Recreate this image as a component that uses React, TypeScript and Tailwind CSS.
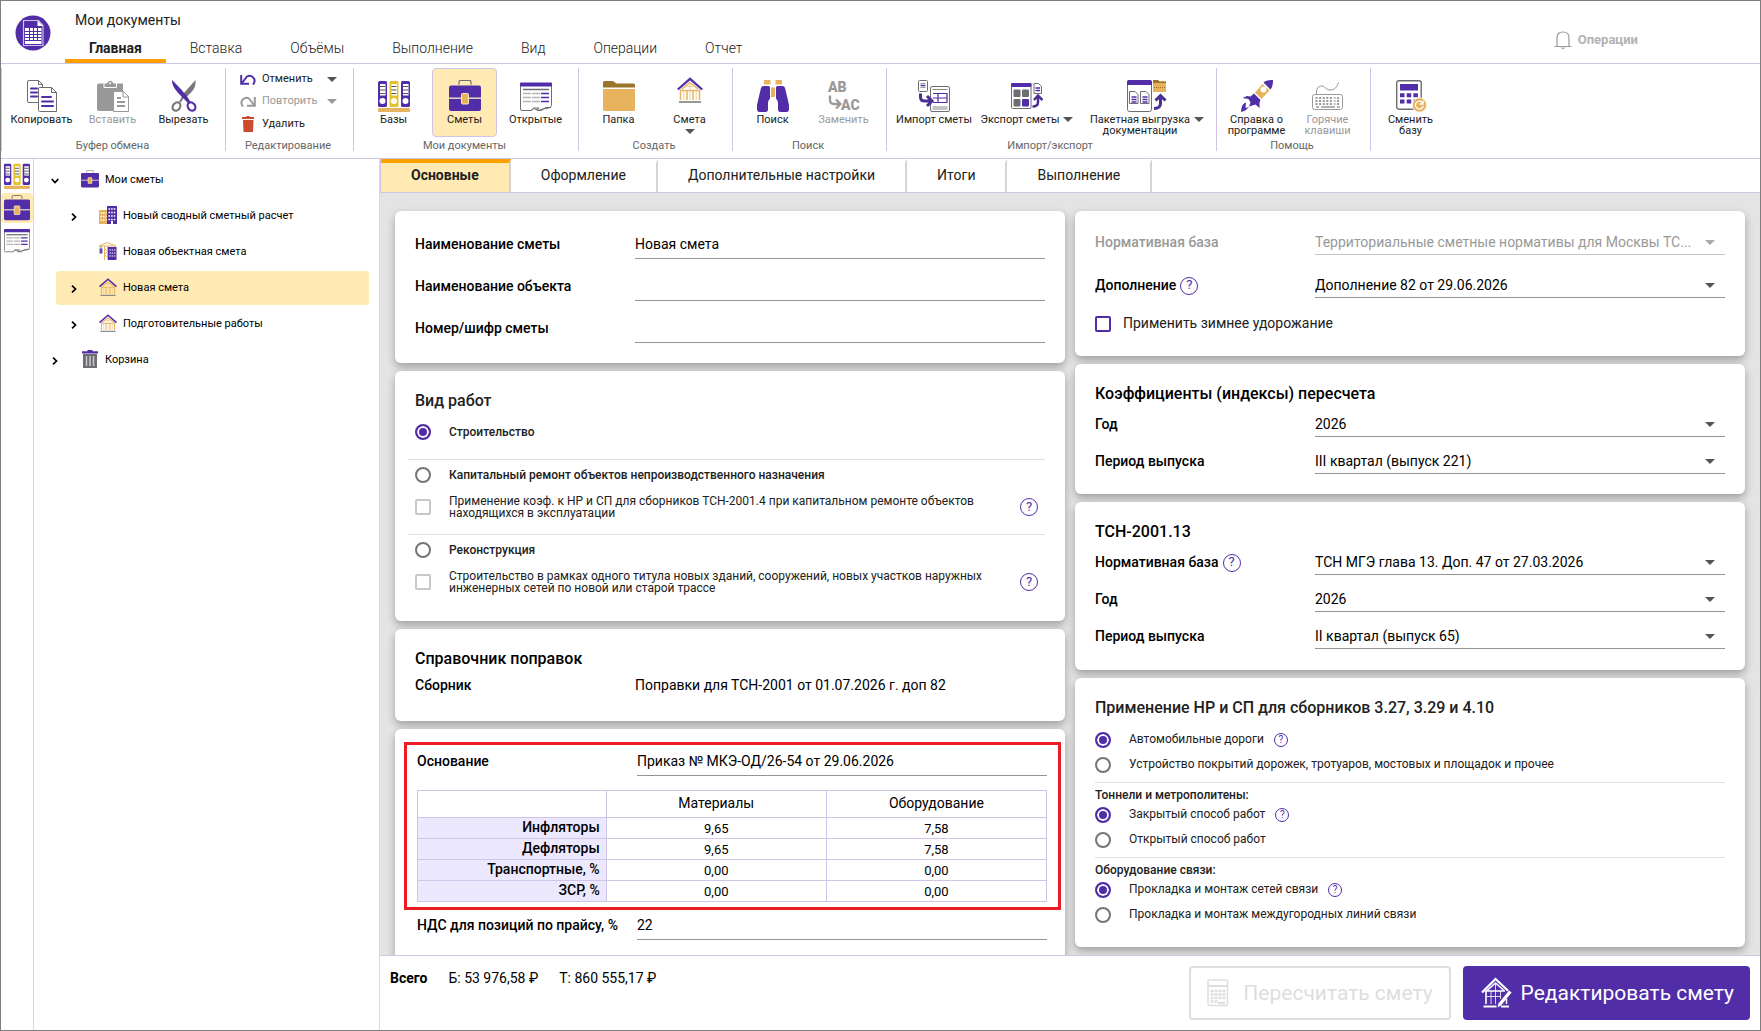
import { useState } from "react";
import type { ReactNode } from "react";
import clsx from "clsx";

interface IconProps {
  className?: string;
}

interface TreeNode {
  label: string;
  icon: ReactNode;
  level: 0 | 1;
  state: "open" | "closed" | "leaf";
}

/* ---------- icons ---------- */

function LogoIcon() {
  return (
    <svg className="size-9" viewBox="0 0 36 36">
      <circle cx="18" cy="18" r="17.5" fill="#512da8" />
      <path d="M8.5 5.5h15l4.500 5v20h-19.500z" fill="#512da8" stroke="#cfc3ea" strokeWidth="1.200" />
      <path d="M22.500 5.500v5.500h5.500z" fill="#fff" />
      <rect x="10" y="13" width="16.500" height="16" fill="#fff" />
      <path d="M10 16.500h16.500M10 19.500h16.500M10 22.500h16.500M10 25.500h16.500M14.500 13v12.500M18.500 13v12.500M22.500 13v12.500" stroke="#512da8" />
    </svg>
  );
}

function CopyIcon({ className = "size-8" }: IconProps) {
  return (
    <svg className={className} viewBox="0 0 32 32" fill="none">
      <path d="M3 .5h9.500l4 4V22.500h-13.500a1.500 1.500 0 0 1-1.500-1.500V2a1.500 1.500 0 0 1 1.500-1.500z" fill="#fff" stroke="#6d6d72" />
      <path d="M12.500.5v4h4" stroke="#6d6d72" />
      <path d="M5 8.500h6M5 12.500h6M5 16.500h6" stroke="#512da8" strokeWidth="2" strokeLinecap="round" />
      <path d="M13.500 7.500h12l5 5V31.500h-17a1 1 0 0 1-1-1v-22a1 1 0 0 1 1-1z" fill="#fff" stroke="#6d6d72" />
      <path d="M25.500 7.500v5h5" stroke="#6d6d72" />
      <path d="M16 17h9M16 21.500h11M16 26h11" stroke="#512da8" strokeWidth="2" strokeLinecap="round" />
    </svg>
  );
}

function PasteIcon() {
  return (
    <svg className="size-8" viewBox="0 0 32 32" fill="none">
      <path d="M2 3.500h24V31H2a2 2 0 0 1-2-2V5.500a2 2 0 0 1 2-2z" fill="#999" />
      <path d="M7 3h3a3.300 3.300 0 0 1 6.500 0h3v4.500H7z" fill="#999" stroke="#fff" />
      <circle cx="13.200" cy="3.300" r="1" fill="#fff" />
      <path d="M18 11.500h8.500l5 5V31.500H16.500V13a1.500 1.500 0 0 1 1.500-1.500z" fill="#fff" stroke="#999" />
      <path d="M26 11.500v5.500h5.500" stroke="#999" />
      <path d="M20 18h4M20 22h8M20 26h8" stroke="#999" strokeWidth="2" />
    </svg>
  );
}

function CutIcon() {
  return (
    <svg className="size-8" viewBox="0 0 32 32" fill="none">
      <path d="M27.500 0c.5 5-1 9-4 12l-5 5-3-3.500z" fill="#77777a" />
      <path d="M15 17l-3 5" stroke="#77777a" strokeWidth="2" />
      <ellipse cx="8.500" cy="26.500" rx="3.500" ry="4.500" transform="rotate(35 8.500 26.500)" stroke="#77777a" strokeWidth="2.200" />
      <path d="M4 0c1.500 1 14 14.500 15.500 17l3 5-2.500 1-7-7C8 11 4 6 4 0z" fill="#512da8" />
      <ellipse cx="23.500" cy="26.500" rx="3.500" ry="4.500" transform="rotate(-35 23.500 26.500)" stroke="#512da8" strokeWidth="2.200" />
    </svg>
  );
}

function UndoIcon({ redo = false }: { redo?: boolean }) {
  const color = redo ? "#999" : "#512da8";
  return (
    <svg className={clsx("w-4 h-3", redo && "-scale-x-100")} viewBox="0 0 16 12" fill="none" stroke={color}>
      <path d="M1.200 2v8.800H9" strokeWidth="2" />
      <path d="M2 10L7 3.500a5 5 0 0 1 7 6.500l-1 1.500" strokeWidth="2" />
    </svg>
  );
}

function DeleteIcon() {
  return (
    <svg className="w-3 h-4" viewBox="0 0 12 16" fill="#cc4b2f">
      <path d="M0 1h4l1-1h2l1 1h4v2H0zM1 4h10.500l-.5 12H1.500z" />
    </svg>
  );
}

function BasesIcon({ className = "size-8" }: IconProps) {
  const binders = [
    { x: 0, fill: "#512da8" },
    { x: 11.5, fill: "#e6c12a" },
    { x: 23, fill: "#512da8" },
  ];
  return (
    <svg className={className} viewBox="0 0 32 32">
      {binders.map((b) => (
        <g key={b.x}>
          <rect x={b.x} y="1" width="9" height="26" rx="1.500" fill={b.fill} />
          <rect x={b.x + 2} y="4" width="5.500" height="11.500" fill="#fff" />
          <path d={`M${b.x + 2} 6.500h5M${b.x + 2} 10h5M${b.x + 2} 13.500h5`} stroke="#555" strokeWidth="1.200" />
          <circle cx={b.x + 4.500} cy="21" r="3" fill="#fff" />
        </g>
      ))}
      <rect y="28" width="32" height="4" rx="1" fill="#e8b35f" />
    </svg>
  );
}

function BriefcaseIcon({ className = "size-8" }: IconProps) {
  return (
    <svg className={className} viewBox="0 0 32 32">
      <path d="M10 4.500V2q0-1.500 1.500-1.500h9Q22 .5 22 2v2.500" fill="none" stroke="#6d6d72" strokeWidth="1.200" />
      <rect y="5.500" width="32" height="25.500" rx="2" fill="#512da8" />
      <path d="M0 18.200h32" stroke="#e6dcc0" strokeWidth="1.500" />
      <rect x="12.500" y="13.500" width="7" height="10.500" rx="1" fill="#e8b35f" stroke="#fbe9c4" />
    </svg>
  );
}

function OpenDocsIcon({ className = "size-8" }: IconProps) {
  return (
    <svg className={className} viewBox="0 0 32 32" fill="none">
      <path d="M.5 5V29q0 1.500 1.500 1.500h9.500l2-1.800 3.500.8 1.500 1 3.500-1.500 5-.5q4.500-.5 4.500-3V5z" stroke="#6d6d72" fill="#fff" />
      <path d="M11 30.500l2.500-2.500h5.500l-2 2.500h4.500l4-3h5.500" stroke="#6d6d72" />
      <rect y="2.500" width="32" height="4" rx="1" fill="#512da8" />
      <path d="M3 9.500h26" stroke="#6d6d72" strokeWidth="1.500" />
      <path d="M3 13.500h8M3 17.500h8M3 21.500h8M12 13.500h8M12 17.500h8M12 21.500h8" stroke="#b5b5b8" strokeWidth="1.500" />
      <path d="M21 13.500h8M21 17.500h8M21 21.500h8" stroke="#512da8" strokeWidth="1.500" />
    </svg>
  );
}

function FolderIcon() {
  return (
    <svg className="size-8" viewBox="0 0 32 32">
      <path d="M0 9V2.500Q0 1 1.500 1H9q1.500 0 2.500 1l1.500 1.500h17.500q1.500 0 1.500 1.500V8H0z" fill="#9a7428" />
      <path d="M0 9h32v20.500q0 1.500-1.500 1.500h-29Q0 31 0 29.500z" fill="#e8b35f" />
      <path d="M0 8h32" stroke="#fff" />
    </svg>
  );
}

function HouseIcon({ className = "size-[26px]" }: IconProps) {
  return (
    <svg className={className} viewBox="0 0 26 26" fill="none">
      <path d="M3.500 12.500V23M22.500 12.500V23M10 13.500V23M16 13.500V23M13 5.500L5 12M13 5.500l8 6.500M3.500 13.500h19" stroke="#e8b35f" strokeWidth="1.500" />
      <path d="M6.800 13.500V23M19.200 13.500V23M13 6v17M9.500 9.500h7" stroke="#f0cd92" />
      <path d="M.8 12.500L13 1.800 25.200 12.500" stroke="#512da8" strokeWidth="2.200" />
      <path d="M2 25h22" stroke="#6d6d72" strokeWidth="1.400" />
    </svg>
  );
}

function BinocularsIcon() {
  return (
    <svg className="size-8" viewBox="0 0 32 32">
      <rect x="7" y="0" width="6.500" height="4.500" fill="#e8b35f" />
      <rect x="18.500" y="0" width="6.500" height="4.500" fill="#e8b35f" />
      <rect x="14" y="7.500" width="4" height="9.500" fill="#e8b35f" />
      <path d="M6.500 6h5Q13 6 13 7.500v11q-2 2-2 5V29q0 3-2.500 3h-6Q0 32 0 29v-4Q2 16 4 8q.5-2 2.500-2z" fill="#512da8" />
      <path d="M25.500 6h-5Q19 6 19 7.500v11q2 2 2 5V29q0 3 2.500 3h6q2.500 0 2.500-3v-4Q30 16 28 8q-.5-2-2.500-2z" fill="#512da8" />
    </svg>
  );
}

function ReplaceIcon() {
  return (
    <svg className="size-8 overflow-visible" viewBox="0 0 32 32">
      <g fill="#999" fontFamily="Roboto, sans-serif" fontWeight="900" fontSize="14">
        <text x="0" y="12">AB</text>
        <text x="13" y="30">AC</text>
      </g>
      <path d="M2 15.500V20q0 4 4 4h6M8 19.500l4.500 4.500-4.500 4.500" fill="none" stroke="#999" strokeWidth="2.300" />
    </svg>
  );
}

function ImportIcon() {
  return (
    <svg className="size-8" viewBox="0 0 32 32" fill="none">
      <rect x=".5" y=".5" width="9" height="11" rx="1" stroke="#6d6d72" />
      <path d="M2.500 3.500h5M2.500 7.500h5" stroke="#999" />
      <path d="M2.500 5.500h5" stroke="#512da8" strokeWidth="1.500" />
      <rect x="12.500" y="6.500" width="19" height="25" rx="1.500" fill="#fff" stroke="#6d6d72" />
      <path d="M14.500 9.500h15M14.500 27h15M14.500 29h15" stroke="#888" />
      <path d="M15 13.500h14M15 18h14M15 22.500h14M20 13.500v9M29 13v10" stroke="#512da8" strokeWidth="1.200" />
      <path d="M2.500 13.500V17q0 4 4 4H12M9 16l5 5-5 5" stroke="#4a2f93" strokeWidth="3" />
    </svg>
  );
}

function ExportIcon() {
  return (
    <svg className="size-8" viewBox="0 0 32 32" fill="none">
      <rect x=".5" y="3.500" width="19.500" height="25" rx="1" stroke="#6d6d72" fill="#fff" />
      <rect y="3" width="20.500" height="4" rx="1" fill="#512da8" />
      <rect x="2.500" y="9.500" width="7" height="7.500" rx="1" fill="#6d6d72" />
      <rect x="11" y="9.500" width="7" height="7.500" rx="1" fill="#6d6d72" />
      <rect x="2.500" y="19" width="7" height="7.500" rx="1" fill="#6d6d72" />
      <rect x="11" y="19" width="7" height="7.500" rx="1" fill="#512da8" />
      <path d="M23 3.500h4.500l3 3V13.500H23z" fill="#fff" stroke="#6d6d72" />
      <path d="M24.500 8h4.500M24.500 10.500h4.500" stroke="#512da8" strokeWidth="1.500" />
      <path d="M21.500 26.500q5.500 0 5.500-4.500v-5.500M23 20l4-4.500 4.500 4.500" stroke="#4a2f93" strokeWidth="2.500" />
    </svg>
  );
}

function BatchIcon() {
  return (
    <svg className="w-10 h-8" viewBox="0 0 40 32" fill="none">
      <rect x=".5" y=".5" width="24" height="31" rx="2" fill="#fff" stroke="#6d6d72" />
      <path d="M0 2q0-2 2-2h21q2 0 2 2v3H0z" fill="#512da8" />
      <path d="M2.500 11.500H8l3 3v9H2.500zM13.500 11.500H19l3 3v9h-8.500z" stroke="#6d6d72" fill="#fff" />
      <path d="M4.500 17h5M4.500 19.500h5M4.500 22h5M15.500 17h5M15.500 19.500h5M15.500 22h5" stroke="#512da8" strokeWidth="1.300" />
      <path d="M26 0h5l1.500 1.500H39V12H26z" fill="#e8b35f" />
      <path d="M26 0h5l1.500 1.500H39V3H26z" fill="#9a7428" />
      <path d="M27 7.500h11" stroke="#9a7428" strokeDasharray="1 1" />
      <path d="M27 28.500q6.500 0 6.500-5v-7M28.500 20.500l5-5 5 5" stroke="#4a2f93" strokeWidth="3" />
    </svg>
  );
}

function RocketIcon() {
  return (
    <svg className="size-8" viewBox="0 0 32 32">
      <path d="M32 0c-5 0-8 1-9.500 2.500l7 7C31 8 32 5 32 0z" fill="#512da8" />
      <path d="M21.500 4L14 12.500l6.500 6.500 8-8.500z" fill="#e8b35f" />
      <circle cx="22.500" cy="9.500" r="3" fill="#fff" />
      <path d="M13 13.500l6.500 6.500-1 2.500v5.500l-4-3.500-6.500 2 1.500-4-2-3.500-6-1 4.500-2 3.500.5z" fill="#512da8" />
      <path d="M5 22.500c-3.500 1-4.500 4-5 9.500 4-1 5.500-2 8-5.500-2 1.500-3 1.500-3.500 1z" fill="#512da8" />
    </svg>
  );
}

function KeyboardIcon() {
  return (
    <svg className="size-8" viewBox="0 0 32 32" fill="none" stroke="#999">
      <path d="M4.500 15V11q0-4 4-5 3-.5 5 2t6 2q5-1 7-7.500" />
      <rect x=".5" y="14.500" width="30" height="15" rx="2" />
      <path d="M3.500 18h24M3.500 21h24M3.500 24h24" strokeWidth="1.800" strokeDasharray="2 1.600" />
      <path d="M4 27h3M9 27h14M25 27h3" strokeWidth="1.500" />
      <path d="M22 16v10" stroke="#fff" />
    </svg>
  );
}

function CalculatorIcon() {
  return (
    <svg className="size-8" viewBox="0 0 32 32">
      <rect x="1.700" y=".7" width="24.500" height="28.500" rx="2" fill="#fff" stroke="#6d6d72" strokeWidth="1.400" />
      <rect x="5" y="4" width="18" height="6.500" fill="#512da8" />
      <path d="M5 15.300h18M5 21.500h18" stroke="#512da8" strokeWidth="4" strokeDasharray="4.500 2.200" />
      <circle cx="24.500" cy="25" r="7.200" fill="#e8b35f" stroke="#fff" strokeWidth=".8" />
      <path d="M27.500 22.500a4 4 0 1 0 .8 3.500M28 20.500V24h-3.500" fill="none" stroke="#fff" strokeWidth="1.300" />
    </svg>
  );
}

function BellIcon() {
  return (
    <svg className="w-[18px] h-[19px]" viewBox="0 0 18 19" fill="none" stroke="#999" strokeWidth="1.200">
      <path d="M.5 15.500h17M3 15V7q0-6 6-6t6 6v8M7.500 16.500q1.500 2 3 0" />
    </svg>
  );
}

function SummaryIcon() {
  return (
    <svg className="size-[18px]" viewBox="0 0 18 18">
      <rect y="4" width="8" height="14" fill="#e8b35f" />
      <path d="M1.500 7h6M1.500 10.500h6M1.500 14h6" stroke="#fff" strokeWidth="1.500" strokeDasharray="1.500 1" />
      <rect x="8" width="10" height="18" fill="#512da8" />
      <path d="M9.500 3h7M9.500 6.500h7M9.500 10h7M9.500 13.500h7" stroke="#fff" strokeWidth="1.500" strokeDasharray="1.600 1" />
      <rect x="12" y="15" width="2" height="3" fill="#fff" />
    </svg>
  );
}

function CraneIcon() {
  return (
    <svg className="size-[18px]" viewBox="0 0 18 18" fill="none">
      <path d="M0 4L8 .5 17 4z" stroke="#e8b35f" />
      <path d="M5.500 4v14M8.500 4v14M5.500 6.500l3 3-3 3 3 3" stroke="#e8b35f" />
      <path d="M2 4v3" stroke="#777" />
      <rect x=".5" y="6.500" width="3" height="5" fill="#6a4bb5" />
      <rect x="9" y="5" width="8.500" height="13" fill="#512da8" />
      <path d="M10.500 8h6M10.500 11h6M10.500 14h6" stroke="#fff" strokeWidth="1.200" strokeDasharray="1.400 .8" />
    </svg>
  );
}

function TrashIcon() {
  return (
    <svg className="size-[18px]" viewBox="0 0 18 18">
      <path d="M1 1.200h5.500V0h5v1.200H17V3.500H1z" fill="#512da8" />
      <path d="M2 4h14v14H2z" fill="#6d6d72" />
      <path d="M5.500 6v10M9 6v10M12.500 6v10" stroke="#c9c9cc" strokeWidth="1.500" />
    </svg>
  );
}

function RecalcIcon() {
  return (
    <svg className="w-[22px] h-7" viewBox="0 0 22 28" fill="none" stroke="#dedede">
      <rect x="1" y="1" width="19.500" height="25.500" rx="1.500" strokeWidth="1.500" />
      <path d="M1 7h19.500" strokeWidth="2" />
      <path d="M3.500 12h15M3.500 15.500h15M3.500 19h15M3.500 22.500h8" strokeWidth="2.500" strokeDasharray="3 1" />
      <path d="M11 24h7" strokeWidth="2.500" />
    </svg>
  );
}

function EditIcon() {
  return (
    <svg className="size-8" viewBox="0 0 32 32" fill="none" stroke="#fff">
      <path d="M1 15.500L14.500 2 29 15.500" strokeWidth="2.200" />
      <path d="M6 13.500L14.500 6l8.500 7.500M5 13.500V27M4 14h20" strokeWidth="1.600" />
      <path d="M10 14v13M14.500 7v20M5 19.500h14M19.500 14v8" strokeWidth=".8" />
      <path d="M28 13l3 2.500-11 13.500-4 2 1-4.500z" fill="#fff" stroke="#512da8" strokeWidth=".8" />
      <path d="M2.500 29.500h13M20 29.500h8" strokeWidth="2" />
      <path d="M25.500 22v5" strokeWidth="1.500" />
    </svg>
  );
}

function Caret({ className }: IconProps) {
  return (
    <svg className={clsx("w-2.5 h-[5px] shrink-0", className)} viewBox="0 0 10 5">
      <path d="M0 0h10L5 5z" fill="currentColor" />
    </svg>
  );
}

function Chevron({ open }: { open: boolean }) {
  return (
    <svg className={clsx("size-2", open && "rotate-90")} viewBox="0 0 8 8" fill="none">
      <path d="M2 .7L5.500 4 2 7.300" stroke="#000" strokeWidth="1.700" />
    </svg>
  );
}

/* ---------- ribbon ---------- */

interface RibbonButtonProps {
  icon: ReactNode;
  label: ReactNode;
  className?: string;
  active?: boolean;
  disabled?: boolean;
  caret?: "side" | "below";
}

function RibbonButton({ icon, label, className = "w-[65px]", active, disabled, caret }: RibbonButtonProps) {
  return (
    <button
      type="button"
      disabled={disabled}
      className={clsx(
        "h-[69px] flex flex-col items-center rounded border pt-[11px] text-[11px] leading-[11px]",
        className,
        active ? "border-[#d1c4e9] bg-[#ffeab3]" : "border-transparent",
        disabled ? "text-[#999]" : "text-[#212121]"
      )}
    >
      <span className="flex h-8 items-center justify-center">{icon}</span>
      <span className="mt-0.5 flex items-start whitespace-nowrap">
        {label}
        {caret === "side" && <Caret className="mt-[3px] ml-1 text-[#555]" />}
      </span>
      {caret === "below" && <Caret className="mt-1 text-[#555]" />}
    </button>
  );
}

function RibbonGroup({ title, className = "pr-2.5", children }: { title: string; className?: string; children: ReactNode }) {
  return (
    <div className={clsx("flex h-[83px] flex-col border-l border-[#d1c4e9] pl-[7px]", className)}>
      <div className="flex gap-1.5">{children}</div>
      <div className="text-center text-[11px] leading-[18px] text-[#666]">{title}</div>
    </div>
  );
}

function EditAction({ icon, label, disabled, caret }: { icon: ReactNode; label: string; disabled?: boolean; caret?: boolean }) {
  return (
    <button
      type="button"
      disabled={disabled}
      className={clsx("flex h-[23px] w-full items-center text-[11px]", disabled ? "text-[#999]" : "text-[#212121]")}
    >
      <span className="flex w-4 justify-center">{icon}</span>
      <span className="ml-1.5">{label}</span>
      {caret && <Caret className={clsx("ml-auto", !disabled && "text-[#555]")} />}
    </button>
  );
}

const MENU = ["Главная", "Вставка", "Объёмы", "Выполнение", "Вид", "Операции", "Отчет"];

function Header() {
  return (
    <header className="flex h-[63px] shrink-0 border-b border-[#d1c4e9]">
      <div className="flex w-16 justify-center pt-[14px]">
        <LogoIcon />
      </div>
      <div className="flex-1">
        <div className="pt-[9px] pl-2.5 text-sm text-[#212121]">Мои документы</div>
        <nav className="mt-0.5 flex">
          {MENU.map((item, i) => (
            <a
              key={item}
              href="#"
              className={clsx(
                "h-[31px] border-b-4 px-6 pt-1.5 text-sm text-[#212121]",
                i === 0 ? "border-[#ffa000] font-bold" : "border-transparent font-light"
              )}
            >
              {item}
            </a>
          ))}
        </nav>
      </div>
      <button type="button" disabled className="mr-[122px] flex items-center gap-1.5 pt-4 text-[13px] font-bold text-[#b3b3b3]">
        <BellIcon />
        Операции
      </button>
    </header>
  );
}

function Ribbon() {
  return (
    <div className="flex h-[95px] shrink-0 border-b border-[#d1c4e9] pt-1">
      <RibbonGroup title="Буфер обмена" className="pr-[9px]">
        <RibbonButton icon={<CopyIcon />} label="Копировать" />
        <RibbonButton icon={<PasteIcon />} label="Вставить" disabled />
        <RibbonButton icon={<CutIcon />} label="Вырезать" />
      </RibbonGroup>
      <RibbonGroup title="Редактирование">
        <div className="flex h-[69px] w-[110px] flex-col pr-1.5 pb-0.5 pl-[7px]">
          <EditAction icon={<UndoIcon />} label="Отменить" caret />
          <EditAction icon={<UndoIcon redo />} label="Повторить" disabled caret />
          <EditAction icon={<DeleteIcon />} label="Удалить" />
        </div>
      </RibbonGroup>
      <RibbonGroup title="Мои документы">
        <RibbonButton icon={<BasesIcon />} label="Базы" />
        <RibbonButton icon={<BriefcaseIcon />} label="Сметы" active />
        <RibbonButton icon={<OpenDocsIcon />} label="Открытые" />
      </RibbonGroup>
      <RibbonGroup title="Создать">
        <RibbonButton icon={<FolderIcon />} label="Папка" />
        <RibbonButton icon={<HouseIcon className="mb-3 size-[26px]" />} label="Смета" caret="below" />
      </RibbonGroup>
      <RibbonGroup title="Поиск">
        <RibbonButton icon={<BinocularsIcon />} label="Поиск" />
        <RibbonButton icon={<ReplaceIcon />} label="Заменить" disabled />
      </RibbonGroup>
      <RibbonGroup title="Импорт/экспорт">
        <RibbonButton className="w-[80px]" icon={<ImportIcon />} label="Импорт сметы" />
        <RibbonButton className="w-[94px]" icon={<ExportIcon />} label="Экспорт сметы" caret="side" />
        <RibbonButton
          className="w-[126px] pl-2"
          icon={<BatchIcon />}
          label={<span>Пакетная выгрузка<br />документации</span>}
          caret="side"
        />
      </RibbonGroup>
      <RibbonGroup title="Помощь">
        <RibbonButton icon={<RocketIcon />} label={<span>Справка о<br />программе</span>} />
        <RibbonButton icon={<KeyboardIcon />} label={<span>Горячие<br />клавиши</span>} disabled />
      </RibbonGroup>
      <RibbonGroup title="">
        <RibbonButton icon={<CalculatorIcon />} label={<span>Сменить<br />базу</span>} />
      </RibbonGroup>
    </div>
  );
}

/* ---------- left side ---------- */

function SideStrip() {
  return (
    <div className="flex w-[33px] shrink-0 flex-col items-center border-r border-[#d9d9d9] pt-1">
      <button type="button" aria-label="Базы" className="flex h-[30px] w-8 items-start justify-center">
        <BasesIcon className="size-[26px]" />
      </button>
      <button type="button" aria-label="Сметы" className="flex h-[30px] w-8 items-center justify-center rounded bg-[#ffeab3]">
        <BriefcaseIcon className="size-[26px]" />
      </button>
      <button type="button" aria-label="Открытые" className="mt-0.5 flex h-[30px] w-8 items-center justify-center">
        <OpenDocsIcon className="size-[26px]" />
      </button>
    </div>
  );
}

const TREE: TreeNode[] = [
  { label: "Мои сметы", icon: <BriefcaseIcon className="size-[18px]" />, level: 0, state: "open" },
  { label: "Новый сводный сметный расчет", icon: <SummaryIcon />, level: 1, state: "closed" },
  { label: "Новая объектная смета", icon: <CraneIcon />, level: 1, state: "leaf" },
  { label: "Новая смета", icon: <HouseIcon className="size-[18px]" />, level: 1, state: "closed" },
  { label: "Подготовительные работы", icon: <HouseIcon className="size-[18px]" />, level: 1, state: "closed" },
  { label: "Корзина", icon: <TrashIcon />, level: 0, state: "closed" },
];

function Tree() {
  const [selected, setSelected] = useState("Новая смета");
  return (
    <nav className="flex w-[346px] shrink-0 flex-col gap-0.5 border-r border-[#d9d9d9] pt-1 pl-[22px] pr-2.5">
      {TREE.map((node) => (
        <button
          key={node.label}
          type="button"
          onClick={() => setSelected(node.label)}
          className={clsx(
            "flex h-[34px] items-center rounded-sm text-[11px] text-black",
            selected === node.label && "bg-[#ffeab3]"
          )}
        >
          <span className={clsx("flex shrink-0 pt-0.5", node.level === 0 ? "-ml-[5px] w-[29px]" : "ml-[14px] w-[28px]")}>
            {node.state !== "leaf" && <Chevron open={node.state === "open"} />}
          </span>
          <span className="flex w-5 justify-center pb-0.5">{node.icon}</span>
          <span className="ml-[5px]">{node.label}</span>
        </button>
      ))}
    </nav>
  );
}

/* ---------- form parts ---------- */

function Card({ className, children }: { className?: string; children: ReactNode }) {
  return (
    <section className={clsx("shrink-0 rounded-md bg-white shadow-[0_4px_8px_rgba(0,0,0,0.3)]", className)}>
      {children}
    </section>
  );
}

function CardTitle({ children }: { children: ReactNode }) {
  return <h2 className="h-6 text-base leading-[26px] font-medium">{children}</h2>;
}

function Help({ small = false }: { small?: boolean }) {
  return (
    <button
      type="button"
      aria-label="Справка"
      className={clsx(
        "flex shrink-0 items-center justify-center rounded-full border border-[#512da8] text-[#512da8]",
        small ? "size-[14px] text-[10px]" : "size-[18px] text-[13px]"
      )}
    >
      ?
    </button>
  );
}

function TextField({ id, label, value = "" }: { id: string; label: string; value?: string }) {
  return (
    <div className="flex h-[29px] text-sm">
      <label htmlFor={id} className="w-[220px] shrink-0 leading-7 font-medium">
        {label}
      </label>
      <input id={id} defaultValue={value} className="min-w-0 flex-1 border-b border-[#949494] outline-none" />
    </div>
  );
}

interface SelectFieldProps {
  id: string;
  label: string;
  value: string;
  help?: boolean;
  disabled?: boolean;
}

function SelectField({ id, label, value, help, disabled }: SelectFieldProps) {
  return (
    <div className={clsx("flex h-[25px] text-sm", disabled && "text-[#999]")}>
      <div className="flex w-[220px] shrink-0 items-center gap-1">
        <label htmlFor={id} className="pb-px font-medium">
          {label}
        </label>
        {help && <Help />}
      </div>
      <div className="relative flex-1">
        <select
          id={id}
          disabled={disabled}
          className={clsx(
            "h-full w-full appearance-none border-b pr-8 outline-none disabled:opacity-100",
            disabled ? "border-[#c4c4c4]" : "border-[#949494]"
          )}
        >
          <option>{value}</option>
        </select>
        <Caret className={clsx("pointer-events-none absolute top-[10px] right-2.5", disabled ? "text-[#aaa]" : "text-[#555]")} />
      </div>
    </div>
  );
}

const RADIO =
  "size-4 shrink-0 appearance-none rounded-full border-2 border-[#757575] checked:border-[#512da8] checked:bg-[#512da8] checked:shadow-[inset_0_0_0_2px_#fff]";

function WorkRadio({ label, checked }: { label: string; checked?: boolean }) {
  return (
    <label className="flex h-6 items-center gap-[18px] text-xs font-medium text-[#212121]">
      <input type="radio" name="work" defaultChecked={checked} className={RADIO} />
      {label}
    </label>
  );
}

function WorkOption({ label }: { label: string }) {
  return (
    <div className="mt-2 flex h-6 items-center pr-[7px]">
      <label className="flex flex-1 items-center gap-[18px] text-xs leading-3 text-[#212121]">
        <input type="checkbox" disabled className="size-4 shrink-0 appearance-none rounded-xs border-2 border-[#c8c8c8]" />
        <span className="max-w-[545px]">{label}</span>
      </label>
      <Help />
    </div>
  );
}

function MethodRadio({ name, label, checked, help }: { name: string; label: string; checked?: boolean; help?: boolean }) {
  return (
    <div className="flex h-[25px] items-center gap-2.5 text-xs text-[#212121]">
      <label className="flex items-center gap-[18px]">
        <input type="radio" name={name} defaultChecked={checked} className={RADIO} />
        <span className="pb-0.5">{label}</span>
      </label>
      {help && <Help small />}
    </div>
  );
}

const RATES = [
  { name: "Инфляторы", materials: "9,65", equipment: "7,58" },
  { name: "Дефляторы", materials: "9,65", equipment: "7,58" },
  { name: "Транспортные, %", materials: "0,00", equipment: "0,00" },
  { name: "ЗСР, %", materials: "0,00", equipment: "0,00" },
];

function RatesTable() {
  return (
    <table className="mt-[14px] w-full table-fixed border-collapse border border-[#d1c4e9] text-center">
      <thead>
        <tr className="h-[27px] text-sm leading-5">
          <td className="w-[30%] border border-[#d1c4e9]" />
          <th className="border border-[#d1c4e9] pb-0.5 font-normal">Материалы</th>
          <th className="border border-[#d1c4e9] pb-0.5 font-normal">Оборудование</th>
        </tr>
      </thead>
      <tbody>
        {RATES.map((row) => (
          <tr key={row.name} className="h-[21px] text-[13px] leading-4">
            <th className="border border-[#d1c4e9] bg-[#ece8fd] pr-1.5 pb-0.5 text-right text-sm leading-4 font-medium">{row.name}</th>
            <td className="border border-[#d1c4e9] pt-0.5">{row.materials}</td>
            <td className="border border-[#d1c4e9] pt-0.5">{row.equipment}</td>
          </tr>
        ))}
      </tbody>
    </table>
  );
}

const TABS = ["Основные", "Оформление", "Дополнительные настройки", "Итоги", "Выполнение"];

function Tabs() {
  const [tab, setTab] = useState(0);
  return (
    <div className="flex h-[34px] shrink-0 border-b border-l border-[#d1c4e9]">
      {TABS.map((name, i) => (
        <button
          key={name}
          type="button"
          onClick={() => setTab(i)}
          className={clsx(
            "border-t-4 border-r-2 border-r-[#d4d4d4] px-[30px] pb-1.5 text-sm text-[#212121]",
            tab === i ? "border-t-[#ffa000] bg-[#ffeab3] font-bold" : "border-t-transparent"
          )}
        >
          {name}
        </button>
      ))}
    </div>
  );
}

function LeftColumn() {
  return (
    <div className="flex min-w-0 flex-1 flex-col gap-2">
      <Card className="flex flex-col gap-[13px] px-5 pt-[19px] pb-5">
        <TextField id="name" label="Наименование сметы" value="Новая смета" />
        <TextField id="object" label="Наименование объекта" />
        <TextField id="code" label="Номер/шифр сметы" />
      </Card>

      <Card className="px-5 pt-[17px] pb-[27px] text-[#212121]">
        <CardTitle>Вид работ</CardTitle>
        <div className="mt-2">
          <WorkRadio label="Строительство" checked />
        </div>
        <div className="mt-[15px] -ml-[7px] border-t border-[#dedede] pt-[3px] pl-[7px]">
          <WorkRadio label="Капитальный ремонт объектов непроизводственного назначения" />
          <WorkOption label="Применение коэф. к НР и СП для сборников ТСН-2001.4 при капитальном ремонте объектов находящихся в эксплуатации" />
        </div>
        <div className="mt-[15px] -ml-[7px] border-t border-[#dedede] pt-[3px] pl-[7px]">
          <WorkRadio label="Реконструкция" />
          <WorkOption label="Строительство в рамках одного титула новых зданий, сооружений, новых участков наружных инженерных сетей по новой или старой трассе" />
        </div>
      </Card>

      <Card className="px-5 pt-[17px] pb-[26px]">
        <CardTitle>Справочник поправок</CardTitle>
        <div className="mt-[5px] flex h-5 text-sm">
          <div className="w-[220px] shrink-0 font-medium">Сборник</div>
          <div>Поправки для ТСН-2001 от 01.07.2026 г. доп 82</div>
        </div>
      </Card>

      <Card className="pt-[13px] pr-1 pb-10 pl-[9px]">
        <div className="border-[3px] border-[#ed1c24] pt-0.5 pr-[11px] pb-[5px] pl-2.5">
          <TextField id="basis" label="Основание" value="Приказ № МКЭ-ОД/26-54 от 29.06.2026" />
          <RatesTable />
        </div>
        <div className="mt-px pr-[14px] pl-[13px]">
          <TextField id="vat" label="НДС для позиций по прайсу, %" value="22" />
        </div>
      </Card>
    </div>
  );
}

function RightColumn() {
  return (
    <div className="flex min-w-0 flex-1 flex-col gap-2">
      <Card className="px-5 pt-[19px] pb-[22px]">
        <div className="flex flex-col gap-[18px]">
          <SelectField id="base" label="Нормативная база" value="Территориальные сметные нормативы для Москвы ТС..." disabled />
          <SelectField id="addition" label="Дополнение" value="Дополнение 82 от 29.06.2026" help />
        </div>
        <label className="mt-4 flex h-5 items-center gap-3 text-sm text-[#212121]">
          <input type="checkbox" className="size-4 appearance-none rounded-xs border-2 border-[#512da8] checked:bg-[#512da8]" />
          <span className="pb-0.5">Применить зимнее удорожание</span>
        </label>
      </Card>

      <Card className="px-5 pt-[17px] pb-5">
        <CardTitle>Коэффициенты (индексы) пересчета</CardTitle>
        <div className="mt-[7px] flex flex-col gap-3">
          <SelectField id="year" label="Год" value="2026" />
          <SelectField id="period" label="Период выпуска" value="III квартал (выпуск 221)" />
        </div>
      </Card>

      <Card className="px-5 pt-[17px] pb-[21px]">
        <CardTitle>ТСН-2001.13</CardTitle>
        <div className="mt-[7px] flex flex-col gap-3">
          <SelectField id="base13" label="Нормативная база" value="ТСН МГЭ глава 13. Доп. 47 от 27.03.2026" help />
          <SelectField id="year13" label="Год" value="2026" />
          <SelectField id="period13" label="Период выпуска" value="II квартал (выпуск 65)" />
        </div>
      </Card>

      <Card className="px-5 pt-[17px] pb-5 text-[#212121]">
        <CardTitle>Применение НР и СП для сборников 3.27, 3.29 и 4.10</CardTitle>
        <div className="mt-2">
          <MethodRadio name="roads" label="Автомобильные дороги" checked help />
          <MethodRadio name="roads" label="Устройство покрытий дорожек, тротуаров, мостовых и площадок и прочее" />
        </div>
        <div className="mt-[5px] border-t border-[#dedede] pt-[5px]">
          <h3 className="text-xs leading-[14px] font-medium">Тоннели и метрополитены:</h3>
          <MethodRadio name="tunnels" label="Закрытый способ работ" checked help />
          <MethodRadio name="tunnels" label="Открытый способ работ" />
        </div>
        <div className="mt-[5px] border-t border-[#dedede] pt-[5px]">
          <h3 className="text-xs leading-[14px] font-medium">Оборудование связи:</h3>
          <MethodRadio name="telecom" label="Прокладка и монтаж сетей связи" checked help />
          <MethodRadio name="telecom" label="Прокладка и монтаж междугородных линий связи" />
        </div>
      </Card>
    </div>
  );
}

function Footer() {
  return (
    <footer className="flex h-[75px] shrink-0 border-t border-[#d1c4e9] px-2.5 pt-2.5 text-sm">
      <div className="flex flex-1 gap-[21px] pt-0.5">
        <span className="font-bold">Всего</span>
        <span>Б: 53 976,58 ₽</span>
        <span>Т: 860 555,17 ₽</span>
      </div>
      <button
        type="button"
        disabled
        className="flex h-[54px] items-center gap-3.5 rounded border-2 border-[#dedede] px-4 text-[21px] text-[#dedede]"
      >
        <RecalcIcon />
        Пересчитать смету
      </button>
      <button
        type="button"
        className="ml-3 flex h-[54px] items-center gap-2 rounded-sm bg-[#512da8] pr-4 pl-[18px] text-[21px] text-white"
      >
        <EditIcon />
        Редактировать смету
      </button>
    </footer>
  );
}

export default function App() {
  return (
    <div className="flex h-screen flex-col overflow-hidden border border-[#7f7f7f] bg-white font-['Roboto','Noto_Sans',sans-serif] text-black">
      <Header />
      <Ribbon />
      <div className="flex min-h-0 flex-1">
        <SideStrip />
        <Tree />
        <main className="flex min-w-0 flex-1 flex-col">
          <Tabs />
          <div className="flex min-h-0 flex-1 gap-2.5 overflow-y-auto bg-[#e4e4e4] pt-[18px] pr-[15px] pb-2 pl-[15px] [scrollbar-width:none]">
            <LeftColumn />
            <RightColumn />
          </div>
          <Footer />
        </main>
      </div>
    </div>
  );
}
